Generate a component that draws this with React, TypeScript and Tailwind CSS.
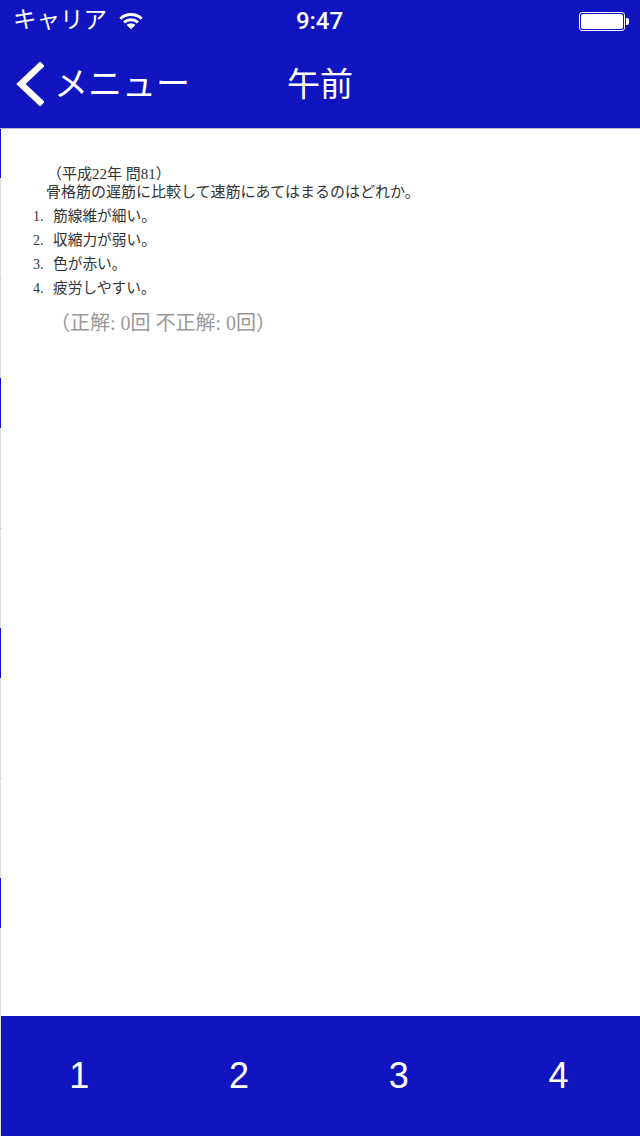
import React from "react";

const jp = "font-['Liberation_Sans','Noto_Sans_CJK_JP',sans-serif]";
const serif = "font-['Liberation_Serif','Noto_Sans_CJK_JP',serif]";

function Wifi() {
  return (
    <svg width="24" height="18" viewBox="0 0 26 19" fill="none" stroke="white" strokeWidth="3.2">
      <path d="M1.5 7C7.5 1 18.5 1 24.5 7" />
      <path d="M5.5 11C9.5 7.3 16.5 7.3 20.5 11" />
      <path d="M13 18.5L8.2 13.8C11 11.8 15 11.8 17.8 13.8Z" fill="white" stroke="none" />
    </svg>
  );
}

function Battery() {
  return (
    <div className="flex items-center">
      <div className="w-[46px] h-[19px] rounded-[3px] border border-white p-px">
        <div className="w-full h-full bg-white rounded-[2px]" />
      </div>
      <div className="w-[3px] h-[7px] bg-white rounded-r-[2px] ml-px" />
    </div>
  );
}

function LeftStrip() {
  const blocks = [
    "w-px h-[49px] bg-[#1014c8]",
    "w-px h-[100px] bg-[#dcdcdc]",
    "w-[2px] h-px bg-[#cfcfcf]",
    "w-px h-[99px] bg-[#dcdcdc]",
    "w-px h-[50px] bg-[#1014c8]",
    "w-px h-[100px] bg-[#dcdcdc]",
    "w-[2px] h-px bg-[#cfcfcf]",
    "w-px h-[99px] bg-[#dcdcdc]",
    "w-px h-[50px] bg-[#1014c8]",
    "w-px h-[100px] bg-[#dcdcdc]",
    "w-[2px] h-px bg-[#cfcfcf]",
    "w-px h-[99px] bg-[#dcdcdc]",
    "w-px h-[50px] bg-[#1014c8]",
    "w-px flex-1 bg-[#dcdcdc]",
  ];
  return (
    <div className="w-[2px] shrink-0 flex flex-col">
      {blocks.map((c, i) => (
        <div key={i} className={c} />
      ))}
    </div>
  );
}

const answers = ["筋線維が細い。", "収縮力が弱い。", "色が赤い。", "疲労しやすい。"];

export default function App() {
  return (
    <div className={`w-[640px] h-[1136px] flex flex-col bg-white overflow-hidden ${jp}`}>
      <header className="h-[129px] shrink-0 bg-[#1015bf] border-b border-[#b8b8c8] text-white flex flex-col">
        <div className="h-10 flex items-center justify-between pl-[13px] pr-[11px] pt-0.5">
          <div className="w-[197px] flex items-center gap-[12px]">
            <span className="text-[23.5px] leading-none">キャリア</span>
            <Wifi />
          </div>
          <span className="text-[24px] font-medium leading-none font-['Roboto',sans-serif]">9:47</span>
          <div className="w-[200px] flex justify-end">
            <Battery />
          </div>
        </div>
        <div className="flex-1 flex items-center pl-4">
          <svg width="28" height="44" viewBox="0 0 28 44" fill="none" stroke="white" strokeWidth="6.5" strokeLinecap="square">
            <path d="M24 4L5 22L24 40" />
          </svg>
          <span className="ml-[10px] w-[233px] text-[34px] leading-none">メニュー</span>
          <span className="text-[33px] leading-none">午前</span>
        </div>
      </header>
      <div className="flex-1 flex min-h-0">
        <LeftStrip />
        <main className={`flex-1 pt-[37px] pl-[30px] text-[#333] text-[15px] ${serif}`}>
          <p className="pl-[15px] leading-[17px]">（平成22年 問81）</p>
          <p className="pl-[14px] leading-[19px]">骨格筋の遅筋に比較して速筋にあてはまるのはどれか。</p>
          <ol className="mt-[2px]">
            {answers.map((a, i) => (
              <li key={a} className="h-6 flex items-center">
                <span className="w-[21px] pl-px text-[14px]">{i + 1}.</span>
                <span className="text-[14.7px]">{a}</span>
              </li>
            ))}
          </ol>
          <p className="mt-[9px] pl-[18px] text-[20px] leading-7 text-[#999]">（正解: 0回 不正解: 0回）</p>
        </main>
      </div>
      <footer className="h-[120px] shrink-0 flex">
        <div className="w-px bg-[#dcdcdc]" />
        <div className="flex-1 bg-[#1015bf] text-white text-[36px] grid grid-cols-4 items-center">
          {[1, 2, 3, 4].map((n) => (
            <button key={n} className="text-center pr-[3px]">{n}</button>
          ))}
        </div>
      </footer>
    </div>
  );
}
